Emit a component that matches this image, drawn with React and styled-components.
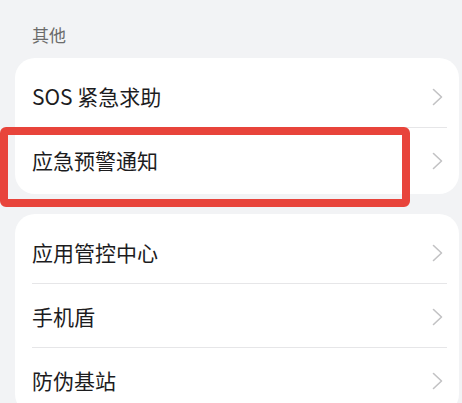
import React from "react";
import styled, { createGlobalStyle } from "styled-components";

const GlobalStyle = createGlobalStyle`
  html, body {
    margin: 0;
    padding: 0;
    background: #f2f3f5;
  }
  body {
    font-family: "Noto Sans CJK SC", "Noto Sans", sans-serif;
    overflow: hidden;
  }
`;

const groups = [
  ["SOS 紧急求助", "应急预警通知"],
  ["应用管控中心", "手机盾", "防伪基站"],
];

export default function App() {
  return (
    <Page>
      <GlobalStyle />
      <Header>其他</Header>
      <Groups>
        {groups.map((items, gi) => (
          <Card key={gi}>
            {items.map((label, i) => (
              <Row key={label} last={i === items.length - 1}>
                <Label>{label}</Label>
                <Chevron />
                {label === "应急预警通知" && <Highlight />}
              </Row>
            ))}
          </Card>
        ))}
      </Groups>
    </Page>
  );
}

function Chevron() {
  return (
    <ChevronIcon width="11" height="18" viewBox="0 0 11 18">
      <polyline
        points="1.5,1.5 9.5,9 1.5,16.5"
        fill="none"
        stroke="#c2c2c4"
        strokeWidth="1.6"
        strokeLinecap="round"
        strokeLinejoin="round"
      />
    </ChevronIcon>
  );
}

const Page = styled.div`
  width: 462px;
  height: 403px;
  overflow: hidden;
`;

const Header = styled.div`
  padding: 23px 0 11px 32px;
  font-size: 17px;
  line-height: 24px;
  color: #6b6b6b;
`;

const Groups = styled.div`
  display: flex;
  flex-direction: column;
  gap: 20px;
  margin: 0 3px 0 15px;
`;

const Card = styled.div`
  background: #ffffff;
  border-radius: 20px;
  padding: 6px 0 2px;
`;

const Row = styled.div`
  position: relative;
  box-sizing: border-box;
  height: 64px;
  display: flex;
  align-items: center;
  justify-content: space-between;
  margin: 0 12px 0 17px;
  padding-right: 4px;
  border-bottom: ${(p) => (p.last ? "none" : "1px solid #e6e6e8")};
`;

const Label = styled.span`
  font-size: 21px;
  color: #1c1c1e;
  letter-spacing: 0;
`;

const ChevronIcon = styled.svg`
  display: block;
  margin-top: 2px;
`;

const Highlight = styled.div`
  position: absolute;
  left: -32px;
  top: -1px;
  width: 410px;
  height: 80px;
  box-sizing: border-box;
  border: 8px solid #e8443b;
  border-radius: 6px;
  pointer-events: none;
`;
